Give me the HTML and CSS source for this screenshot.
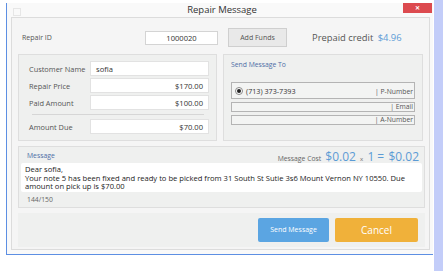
FILE: index.html
```html
<!DOCTYPE html>
<html>
<head>
<meta charset="utf-8">
<link rel="stylesheet" href="styles.css">
</head>
<body>
<div class="screen">
  <div class="window">
    <div class="titlebar">
      <span class="app-icon"></span>
      <span class="title">Repair Message</span>
      <span class="close">&#x2715;</span>
    </div>
    <div class="panel">
      <div class="toprow">
        <span class="lbl repair-lbl">Repair ID</span>
        <div class="field repair-id">1000020</div>
        <div class="btn-funds">Add Funds</div>
        <div class="credit">Prepaid credit <span class="blue">$4.96</span></div>
      </div>
      <div class="boxes">
        <div class="box customer">
          <div class="frow"><span class="lbl">Customer Name</span><div class="field left">sofia</div></div>
          <div class="frow"><span class="lbl">Repair Price</span><div class="field">$170.00</div></div>
          <div class="frow"><span class="lbl">Paid Amount</span><div class="field">$100.00</div></div>
          <div class="divider"></div>
          <div class="frow"><span class="lbl">Amount Due</span><div class="field">$70.00</div></div>
        </div>
        <div class="box sendto">
          <div class="box-title">Send Message To</div>
          <div class="phone">
            <span class="radio"><span class="dot"></span></span>
            <span class="num">(713) 373-7393</span>
            <span class="tag">| P-Number</span>
          </div>
          <div class="slot"><span class="tag">| Email</span></div>
          <div class="slot"><span class="tag">| A-Number</span></div>
        </div>
      </div>
      <div class="box message">
        <div class="msg-head">
          <span class="box-title">Message</span>
          <span class="cost"><span class="cost-lbl">Message Cost</span> <span class="big">$0.02</span> <span class="x">x</span> <span class="big">1 =</span> <span class="big">$0.02</span></span>
        </div>
        <div class="msg-text">Dear sofia,<br>Your note 5 has been fixed and ready to be picked from 31 South St Sutie 3s6 Mount Vernon NY 10550. Due amount on pick up is $70.00</div>
        <div class="counter">144/150</div>
      </div>
      <div class="actions">
        <div class="btn send">Send Message</div>
        <div class="btn cancel">Cancel</div>
      </div>
    </div>
  </div>
  <div class="strip"></div>
</div>
</body>
</html>
```
FILE: styles.css
```css
html, body {
  margin: 0;
  padding: 0;
  background: #ffffff;
}
body {
  font-family: "Open Sans", "Noto Sans", sans-serif;
  color: #444;
  width: 443px;
  height: 271px;
  overflow: hidden;
}
.screen {
  display: flex;
  height: 271px;
}
.window {
  margin-left: 6px;
  margin-top: 3px;
  width: 426px;
  height: 251px;
  border-left: 1px solid #5d8fe3;
  border-bottom: 1px solid #5d8fe3;
  background: #f9f9f9;
  display: flex;
  flex-direction: column;
}
.strip {
  margin-left: 1px;
  width: 9px;
  height: 271px;
  background: #c3cdf9;
}
.titlebar {
  height: 14px;
  display: flex;
  align-items: flex-start;
  position: relative;
}
.app-icon {
  position: absolute;
  left: 6px;
  top: 5px;
  width: 6px;
  height: 6px;
  border: 1px solid #e6e6e6;
}
.title {
  flex: 1;
  text-align: center;
  font-size: 9.5px;
  line-height: 14px;
  color: #333;
  padding-left: 4px;
}
.close {
  position: absolute;
  right: 1px;
  top: 0;
  width: 29px;
  height: 10px;
  background: #dc4a4f;
  color: #fff;
  font-size: 6px;
  font-weight: bold;
  line-height: 10px;
  text-align: center;
}
.panel {
  margin-left: 4px;
  width: 419px;
  height: 233px;
  border: 1px solid #dcdcdc;
  background: #f5f5f5;
  padding: 0 6px 0 6px;
  box-sizing: border-box;
  display: flex;
  flex-direction: column;
}
.lbl {
  font-size: 7.4px;
  color: #555;
}
.toprow {
  height: 36px;
  display: flex;
  align-items: center;
  padding-top: 3px;
  box-sizing: border-box;
}
.repair-lbl {
  margin-left: 4px;
  width: 123px;
  font-size: 7px;
}
.field {
  background: #fff;
  border: 1px solid #e2e2e2;
  font-size: 7.6px;
  color: #333;
  height: 15px;
  line-height: 15px;
  box-sizing: border-box;
  text-align: right;
  padding: 0 5px;
}
.field.left {
  text-align: left;
  padding-left: 5px;
}
.repair-id {
  width: 73px;
  height: 14px;
  line-height: 12px;
  text-align: center;
  border-color: #d4d4d4;
}
.btn-funds {
  margin-left: 10px;
  width: 59px;
  height: 19px;
  box-sizing: border-box;
  border: 1px solid #cfcfcf;
  background: #e9e9e9;
  font-size: 7px;
  color: #555;
  line-height: 17px;
  text-align: center;
}
.credit {
  margin-left: 25px;
  font-size: 9.4px;
  color: #555;
  white-space: nowrap;
}
.blue {
  color: #5b9bd5;
  margin-left: 2px;
}
.boxes {
  display: flex;
  gap: 6px;
}
.box {
  background: #eff0ef;
  border: 1px solid #dedede;
  box-sizing: border-box;
}
.customer {
  width: 200px;
  height: 87px;
  padding: 6px 7px 6px 10px;
  display: flex;
  flex-direction: column;
  gap: 2px;
}
.frow {
  display: flex;
  align-items: center;
  justify-content: space-between;
  height: 15px;
}
.frow .field {
  width: 119px;
}
.divider {
  height: 1px;
  background: #d6d6d6;
  margin: 2px 5px 2px 3px;
}
.sendto {
  width: 201px;
  height: 87px;
  padding: 5px 7px 0 7px;
}
.box-title {
  font-size: 6.8px;
  color: #4e6ea6;
}
.sendto .box-title {
  height: 22px;
}
.phone {
  height: 17px;
  border: 1px solid #b4b4b4;
  background: #f3f4f3;
  box-sizing: border-box;
  display: flex;
  align-items: center;
  padding: 0 1px 0 3px;
}
.radio {
  width: 6px;
  height: 6px;
  border: 1px solid #888;
  border-radius: 50%;
  display: flex;
  align-items: center;
  justify-content: center;
  background: #fff;
}
.dot {
  width: 4px;
  height: 4px;
  border-radius: 50%;
  background: #222;
}
.num {
  margin-left: 3px;
  font-size: 7.2px;
  color: #333;
  flex: 1;
}
.tag {
  font-size: 6.8px;
  color: #555;
}
.phone .tag {
  margin-top: 2px;
}
.slot {
  margin-top: 3px;
  height: 10px;
  border: 1px solid #b4b4b4;
  background: #f3f4f3;
  box-sizing: border-box;
  display: flex;
  align-items: center;
  justify-content: flex-end;
  padding-right: 1px;
  line-height: 8px;
}
.message {
  margin-top: 5px;
  width: 407px;
  height: 62px;
  padding: 0 2px 0 2px;
  display: flex;
  flex-direction: column;
}
.msg-head {
  height: 16px;
  display: flex;
  align-items: center;
  justify-content: space-between;
  padding: 0 3px 0 6px;
}
.cost {
  white-space: nowrap;
}
.cost-lbl {
  font-size: 6.8px;
  color: #666;
}
.big {
  font-size: 12px;
  color: #5b9bd5;
}
.x {
  font-size: 6px;
  color: #666;
}
.msg-text {
  background: #fff;
  height: 29px;
  font-size: 7.6px;
  line-height: 8.6px;
  color: #222;
  padding: 2px 4px 0 4px;
  box-sizing: border-box;
  border-radius: 2px;
  overflow: hidden;
}
.counter {
  font-size: 6.8px;
  color: #666;
  padding-left: 6px;
  line-height: 15px;
}
.actions {
  margin-top: 5px;
  height: 34px;
  background: #eff0ef;
  display: flex;
  align-items: center;
  justify-content: flex-end;
  gap: 6px;
  padding-right: 7px;
  width: 407px;
  box-sizing: border-box;
}
.btn {
  height: 24px;
  line-height: 24px;
  color: #fff;
  text-align: center;
  border-radius: 2px;
}
.send {
  width: 71px;
  background: #5ba5e2;
  font-size: 7px;
}
.cancel {
  width: 83px;
  background: #f0b13a;
  font-size: 10px;
}
```
